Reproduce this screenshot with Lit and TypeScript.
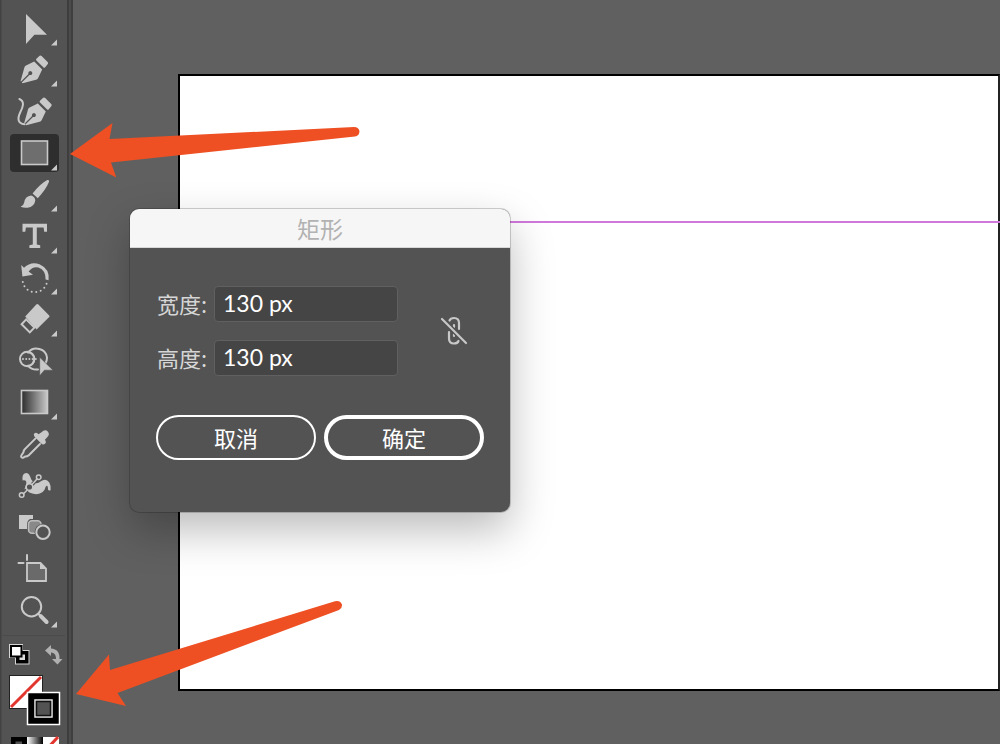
import { LitElement, html, css, svg, nothing, type TemplateResult } from "lit";
import { customElement, property, state } from "lit/decorators.js";

interface Tool {
  id: string;
  label: string;
  more: boolean;
  art: TemplateResult;
}

const nib = svg`
  <path d="M39.6 -13.2Q40.6 -14 41.6 -13L47.6 -7Q48.6 -6 47.8 -5L45 -1.6Q44.2 -.9 43.3 -1.8L36.4 -8.6Q35.6 -9.4 36.4 -10.2Z"/>
  <path d="M34.2 -7.6L42.2 .6L38 9.2Q37.4 10.4 36 10.8L22.6 14.2L21.8 13.4L29.4 5.9A2 2 0 1 0 28.5 5L21 12.6L20.6 12L24.4 -1.4Q24.8 -2.8 26 -3.4Z"/>`;

const tools: Tool[] = [
  { id: "select", label: "直接选择工具", more: true, art: svg`<path d="M26 -14V16L34.4 6.8H47Z"/>` },
  { id: "pen", label: "钢笔工具", more: true, art: nib },
  {
    id: "curve", label: "曲率工具", more: false,
    art: svg`<g transform="translate(3.6 0)">${nib}</g>
      <path class="line" d="M19.4 -12C25 -9.500 23 -4 20.400 1C17 8 18 12.500 24.500 13.200"/>`,
  },
  {
    id: "rect", label: "矩形工具", more: true,
    art: svg`<rect x="21.500" y="-12" width="26" height="23.500" fill="#6e6e6e" stroke="#c9c9c9" stroke-width="1.600"/>`,
  },
  {
    id: "brush", label: "画笔工具", more: true,
    art: svg`<path d="M47.300 -14Q49.600 -14.500 49 -12.200Q46 -4.500 37.800 4.200L32.600 -.6Q40.500 -10.500 47.300 -14Z"/>
      <path d="M31.200 1.400Q34.800 2.400 35.300 6.200Q34.600 12.800 27.500 13.700Q23.500 14 20.600 12.800Q23.600 11.800 24.200 8.500Q25 2 31.200 1.400Z"/>`,
  },
  {
    id: "type", label: "文字工具", more: true,
    art: svg`<path d="M22.500 -12.200H47V-4.200H44.200L43.600 -8.600H36.800V8.600L40.200 9.300V12H29.400V9.300L32.800 8.600V-8.600H25.900L25.300 -4.200H22.500Z"/>`,
  },
  {
    id: "rotate", label: "旋转工具", more: true,
    art: svg`<path d="M21.200 -12L24 -9.200Q31 -16 39.500 -12.700Q50 -8 48.600 3.200L45.600 2.600Q46 -6.500 38.500 -9.400Q33 -11 28.600 -5.400L33 -2.200L22.400 -.6Z"/>
      <path class="dots" d="M22.800 5A12.300 12.300 0 0 0 47.200 3"/>`,
  },
  {
    id: "eraser", label: "橡皮擦工具", more: true,
    art: svg`<path d="M36.300 -14.600Q37.400 -15.400 38.400 -14.400L49.200 -3.600Q50 -2.800 49.200 -1.900L36.600 10.600L25.200 -2.600Z"/>
      <path class="line" d="M26.200 .4L21.600 5.200L29.800 13.400L34.400 8.600Z"/>`,
  },
  {
    id: "builder", label: "形状生成器工具", more: false,
    art: svg`<circle class="line" cx="27.200" cy="-2" r="7.200"/>
      <path class="line" d="M28 -8.600C34 -15.600 46 -12.500 47 -3.500Q47 -.5 45.600 2M28 4.800Q32 9.200 38 8.400"/>
      <path class="line" stroke-opacity=".65" d="M28 -8.600Q34 -8 34 -2Q34 4 28 4.800"/>
      <path class="dots tight" d="M23 -2H39"/>
      <path d="M39.700 -3.800V14.800L44.400 9.200H53Z" stroke="#535353" stroke-width=".6"/>`,
  },
  {
    id: "gradient", label: "渐变工具", more: true,
    art: svg`<defs><linearGradient id="ramp"><stop offset="0" stop-color="#2c2c2c"/><stop offset="1" stop-color="#c8c8c8"/></linearGradient></defs>
      <rect x="21.500" y="-11.500" width="26" height="23" fill="url(#ramp)" stroke="#c9c9c9" stroke-width="1.600"/>`,
  },
  {
    id: "eyedropper", label: "吸管工具", more: false,
    art: svg`<path d="M41.500 -11.800Q45 -15.200 48 -12.300Q50.200 -9.600 47 -6.400L44.900 -4.200Q46.800 -1.800 45 -.2Q43 1.300 41.200 -.6L34.400 -7.500Q33 -9.400 34.700 -10.900Q36.600 -12.200 38.600 -9.800Z"/>
      <path class="line" d="M35.600 -5.600L24.400 5.600Q23.600 6.800 23.300 8.600L21.600 11Q20.400 12.800 22 13.600Q23.400 14.100 24.400 12.800Q27.500 12.500 28.800 11.200L40 0"/>`,
  },
  {
    id: "warp", label: "操控变形工具", more: false,
    art: svg`<path d="M24.500 4C27 -1 27.500 -6 22.600 -4.500Q21.800 -10 24.500 -11.600Q28.500 -13 30.300 -8Q31.200 -4.500 33.500 -3Q37 -.5 40.500 -3.500Q46 -7.500 49.300 -2.500Q51.300 1 50.600 5.200Q49 6.200 48 4.800Q48 -.8 45.800 1.500Q44 8.800 36.500 9.200Q29.500 9 24.500 4Z"/>
      <path d="M22 10.200L38.700 -7.600" stroke="#535353" stroke-width="3.600"/>
      <path class="line thin" d="M23.500 8.800L27 5.300M32 -.4L37 -6"/>
      <g class="line thin"><circle cx="21.700" cy="10" r="2.300"/><circle cx="38.700" cy="-7.800" r="2.300"/><circle cx="29.500" cy="2" r="3.300" fill="#535353"/></g>`,
  },
  {
    id: "blend", label: "混合工具", more: false,
    art: svg`<path d="M19 -12H33V-8H30Q27 -6.500 27 -2V2H19Z"/>
      <rect x="28.500" y="-6.200" width="12.500" height="12.500" rx="3.500" fill="#898989" stroke="#bdbdbd" stroke-width="1.500"/>
      <circle cx="43" cy="5.300" r="8.400" fill="#535353"/>
      <circle class="line" cx="43" cy="5.300" r="6.700"/>`,
  },
  {
    id: "artboard", label: "画板工具", more: false,
    art: svg`<path class="line" d="M27 -14V-9M18.500 -6H23.500"/>
      <path d="M27 -6H40.500L46 -.5V12H27Z" fill="#6a6a6a" stroke="#c9c9c9" stroke-width="1.800"/><path d="M40 -6L46 0H40Z"/>`,
  },
  {
    id: "zoom", label: "缩放工具", more: true,
    art: svg`<circle class="line" cx="31.500" cy="-3.300" r="9.700"/>
      <path class="line" d="M38.200 3.800L40 5.600"/><path class="line thick" d="M40.800 6.200L46.600 12"/>`,
  },
];

@customElement("tool-bar")
class ToolBar extends LitElement {
  @property() active = "rect";

  static styles = css`
    :host {
      display: block;
      flex: none;
      box-sizing: border-box;
      width: 73px;
      padding-top: 7px;
      overflow: hidden;
      background: linear-gradient(90deg, #424242 0 1px, #4b4b4b 1px 2px, #535353 2px 67px, #3e3e3e 67px 69px, #4c4c4c 69px 71px, #3f3f3f 71px 73px);
    }
    button {
      display: block;
      margin: 0;
      padding: 0;
      border: 0;
      background: none;
    }
    svg { display: block; overflow: visible; }
    .tools {
      display: grid;
      grid-template-rows: repeat(15, 1fr);
      align-items: center;
      height: 624px;
      padding-left: 10px;
    }
    .tool {
      width: 49px;
      height: 38px;
      border-radius: 4px;
      fill: #c9c9c9;
    }
    .tool.active { background: #2e2e2e; }
    .line { fill: none; stroke: #c9c9c9; stroke-width: 2; stroke-linecap: round; }
    .thin { stroke-width: 1.5; }
    .thick { stroke-width: 4; }
    .dots { fill: none; stroke: #c9c9c9; stroke-width: 2; stroke-linecap: round; stroke-dasharray: 0 4.6; }
    .tight { stroke-dasharray: 0 3.2; }
    .mini {
      display: flex;
      gap: 15px;
      margin: 4px 0 0 2px;
      padding: 8px 0 0 7px;
      width: 56px;
      border-top: 1px solid #4b4b4b;
    }
    .colors { position: relative; width: 52px; height: 50px; margin: 10px 0 0 9px; }
    .fill { position: absolute; left: 0; top: 0; }
    .stroke { position: absolute; right: 1px; bottom: 0; }
    .modes { display: flex; margin: 12px 0 0 11px; }
  `;

  private choose(id: string) {
    this.dispatchEvent(new CustomEvent("tool-change", { detail: id }));
  }

  render() {
    return html`
      <div class="tools">
        ${tools.map((t) => html`
          <button class="tool ${t.id === this.active ? "active" : ""}" aria-label=${t.label} @click=${() => this.choose(t.id)}>
            <svg width="49" height="38" viewBox="10 -19 49 38">
              ${t.art}
              ${t.more ? svg`<path d="M57 11.500V17.500H51Z"/>` : nothing}
            </svg>
          </button>`)}
      </div>
      <div class="mini">
        <button aria-label="默认填色和描边">
          <svg width="21" height="21" viewBox="0 0 21 21">
            <path d="M0 0H14V6H20.500V20.500H6V14H0Z" fill="#d5d5d5"/>
            <rect x="7" y="7" width="12.500" height="12.500" fill="#000"/>
            <rect x="10.500" y="10.500" width="5.500" height="5.500" fill="#ddd"/>
            <rect x="2" y="2" width="10.500" height="10.500" fill="#fff" stroke="#000" stroke-width="2"/>
          </svg>
        </button>
        <button aria-label="互换填色和描边">
          <svg width="18" height="21" viewBox="0 0 18 21">
            <path d="M0 6.500L6 1V4.500C12 5 15 8.500 14.500 15H17.500L12.500 20.500L7 15H11C11 11 9.500 8.800 6 8.500V12Z" fill="#b0b0b0"/>
          </svg>
        </button>
      </div>
      <div class="colors">
        <button class="fill" aria-label="填色">
          <svg width="34" height="34" viewBox="0 0 34 34">
            <rect x=".5" y=".5" width="33" height="33" fill="#fff" stroke="#222"/>
            <path d="M2 32L32 2" stroke="#e2352e" stroke-width="3"/>
          </svg>
        </button>
        <button class="stroke" aria-label="描边">
          <svg width="33" height="33" viewBox="0 0 33 33">
            <rect x=".5" y=".5" width="32" height="32" fill="#000" stroke="#fff" stroke-width="1.500"/>
            <rect x="8" y="8" width="17" height="17" fill="#535353" stroke="#eee" stroke-width="1.500"/>
            <rect x="9.500" y="9.500" width="14" height="14" fill="none" stroke="#111" stroke-width="1.500"/>
          </svg>
        </button>
      </div>
      <div class="modes">
        <button aria-label="颜色"><svg width="16" height="16" viewBox="0 0 16 16"><path d="M0 0H16V16H0Z"/><path d="M4.500 4.500H11V11H4.500Z" fill="#535353"/></svg></button>
        <button aria-label="渐变"><svg width="16" height="16" viewBox="0 0 16 16"><defs><linearGradient id="mode"><stop stop-color="#fff"/><stop offset="1"/></linearGradient></defs><path d="M0 0H16V16H0Z" fill="url(#mode)"/></svg></button>
        <button aria-label="无"><svg width="16" height="16" viewBox="0 0 16 16"><path d="M0 0H16V16H0Z" fill="#fff"/><path d="M1 15L15 0" stroke="#e2352e" stroke-width="3"/></svg></button>
      </div>`;
  }
}

@customElement("size-dialog")
class SizeDialog extends LitElement {
  @state() private linked = false;

  static styles = css`
    :host {
      display: block;
      box-sizing: border-box;
      width: 380px;
      border-radius: 9px;
      overflow: hidden;
      background: #535353;
      color: #d6d6d6;
      font-family: "Noto Sans CJK SC", sans-serif;
      font-size: 22px;
      box-shadow: 0 0 0 1px rgba(0, 0, 0, 0.18), 0 18px 44px rgba(0, 0, 0, 0.27);
    }
    .title {
      margin: 0;
      height: 38px;
      line-height: 38px;
      border-bottom: 1px solid #d8d8d8;
      background: #f6f6f6;
      color: #b2b2b2;
      font-size: 23px;
      font-weight: 400;
      text-align: center;
    }
    .body { padding: 38px 26px 52px; }
    .row { display: flex; align-items: center; }
    .fields { display: grid; gap: 18px; }
    .field { display: flex; align-items: center; }
    label { width: 58px; line-height: 34px; padding: 0 0 2px 1px; box-sizing: border-box; }
    input {
      box-sizing: border-box;
      width: 184px;
      height: 36px;
      padding: 0 8px 2px;
      border: 1px solid #606060;
      border-radius: 4px;
      background: #454545;
      color: #fff;
      font: 23px "Lato", sans-serif;
    }
    button { padding: 0; background: none; color: #fff; font: inherit; }
    .link { margin: 0 16px 0 auto; border: 0; }
    .link svg { display: block; }
    .actions { display: grid; grid-template-columns: 1fr 1fr; gap: 8px; margin-top: 39px; }
    .action { height: 45px; padding-bottom: 2px; border: 2px solid #fff; border-radius: 23px; line-height: 38px; }
    .primary { border-width: 4px; line-height: 34px; }
  `;

  render() {
    return html`
      <h1 class="title">矩形</h1>
      <div class="body">
        <div class="row">
          <div class="fields">
            <div class="field"><label for="w">宽度:</label><input id="w" value="130 px" /></div>
            <div class="field"><label for="h">高度:</label><input id="h" value="130 px" /></div>
          </div>
          <button class="link" aria-label="约束宽度和高度比例" aria-pressed=${this.linked} @click=${() => (this.linked = !this.linked)}>
            <svg width="28" height="30" viewBox="0 0 28 30" fill="none" stroke="#c8c8c8" stroke-width="2.200" stroke-linecap="round">
              <path d="M9.500 4.500Q10.500 2 14 2Q19 2 19 7V13M9 16V22.500Q9 27.500 14 27.500Q17.500 27.500 18.500 25M14 9V11M14 18V20"/>
              <path d="M2 3L26 27" stroke="#535353" stroke-width="5"/>
              <path d="M2 3L26 27"/>
            </svg>
          </button>
        </div>
        <div class="actions">
          <button class="action">取消</button>
          <button class="action primary">确定</button>
        </div>
      </div>`;
  }
}

@customElement("app-root")
class AppRoot extends LitElement {
  @state() private tool = "rect";

  static styles = css`
    :host {
      position: relative;
      display: flex;
      height: 100vh;
      overflow: hidden;
      background: #606060;
    }
    .workspace {
      position: relative;
      display: flex;
      flex: 1;
      padding: 74px 0 53px 105px;
    }
    .artboard { flex: 1; border: 2px solid #000; border-right-color: #222; background: #fff; }
    .guide { position: absolute; left: 105px; right: 0; top: 221px; height: 2px; background: #d078dc; }
    .dialog { position: absolute; left: 57px; top: 209px; }
    .arrows { position: absolute; left: 0; top: 0; pointer-events: none; }
  `;

  render() {
    return html`
      <tool-bar .active=${this.tool} @tool-change=${(e: CustomEvent<string>) => (this.tool = e.detail)}></tool-bar>
      <main class="workspace">
        <div class="artboard"></div>
        <div class="guide"></div>
        <size-dialog class="dialog" role="dialog" aria-label="矩形"></size-dialog>
      </main>
      <svg class="arrows" width="400" height="744" viewBox="0 0 400 744" fill="#ee5024" aria-hidden="true">
        <path d="M70 154L112.500 123L109.500 139L354 127Q359 127 359.500 131.500Q359 136 355 136.500L111 162.600L116.300 177.500Z"/>
        <path d="M76 694L109 654.500L110 670L335 601.300Q340 600 342 604.500Q342.500 608 339 610L117.500 693L126 706Z"/>
      </svg>`;
  }
}
